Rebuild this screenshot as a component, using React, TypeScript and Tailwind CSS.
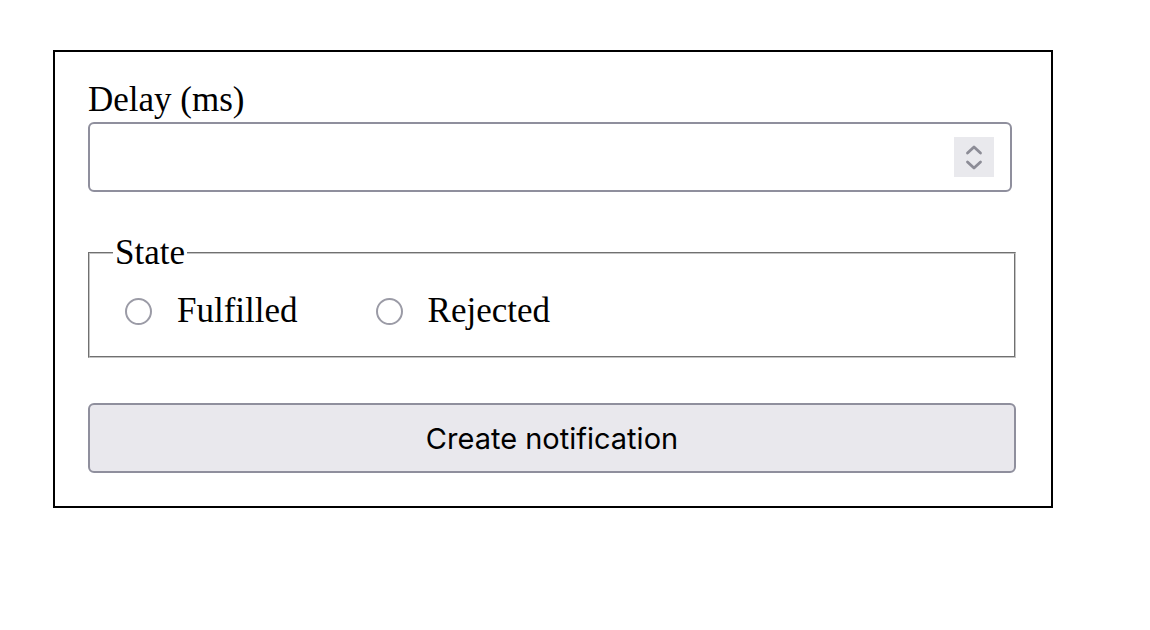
import { useState } from 'react';

const serif = "font-['Liberation_Serif','Times_New_Roman',serif]";

function Radio({ label, checked, onChange }: { label: string; checked: boolean; onChange: () => void }) {
  return (
    <label className="flex items-center gap-[25px]">
      <input
        type="radio"
        name="state"
        checked={checked}
        onChange={onChange}
        className="m-0 h-[27px] w-[27px] shrink-0 appearance-none rounded-full border-2 border-[#9b9ba6] bg-white checked:border-[8px] checked:border-[#0a64d8]"
      />
      <span>{label}</span>
    </label>
  );
}

export default function App() {
  const [state, setState] = useState<'fulfilled' | 'rejected' | null>(null);

  return (
    <div className="min-h-[630px] bg-white pl-[53px] pt-[50px]">
      <form
        className={`w-[1000px] border-2 border-black pl-[33px] pr-[35px] pt-[28px] pb-[33px] text-[35px] leading-[40px] text-black ${serif}`}
        onSubmit={(event) => event.preventDefault()}
      >
        <label className="block">Delay (ms)</label>
        <div className="mt-[2px] flex h-[70px] w-[924px] items-center justify-end rounded-[6px] border-2 border-[#8f8f9d] bg-white pr-[16px]">
          <div className="flex h-[40px] w-[40px] flex-col items-center justify-center gap-[5px] bg-[#e9e9ed]">
            <svg width="18" height="10" viewBox="0 0 18 10" fill="none">
              <path d="M2.5 8 9 2l6.5 6" stroke="#8c8c96" strokeWidth="2.8" strokeLinecap="round" strokeLinejoin="round" />
            </svg>
            <svg width="18" height="10" viewBox="0 0 18 10" fill="none">
              <path d="M2.5 2 9 8l6.5-6" stroke="#8c8c96" strokeWidth="2.8" strokeLinecap="round" strokeLinejoin="round" />
            </svg>
          </div>
        </div>

        <fieldset className="mt-[38px] w-[928px] border-2 border-[#c4c4c4] p-0 [border-style:groove]">
          <legend className="ml-[23px] px-[2px] leading-[46px]">State</legend>
          <div className="flex items-center gap-[78px] pl-[35px] pt-[15px] pb-[25px]">
            <Radio label="Fulfilled" checked={state === 'fulfilled'} onChange={() => setState('fulfilled')} />
            <Radio label="Rejected" checked={state === 'rejected'} onChange={() => setState('rejected')} />
          </div>
        </fieldset>

        <button
          type="submit"
          className="mt-[45px] flex h-[70px] w-[928px] items-center justify-center rounded-[6px] border-2 border-[#8f8f9d] bg-[#e9e8ed] font-['Inter',sans-serif] text-[29px] leading-none text-black"
        >
          Create notification
        </button>
      </form>
    </div>
  );
}
